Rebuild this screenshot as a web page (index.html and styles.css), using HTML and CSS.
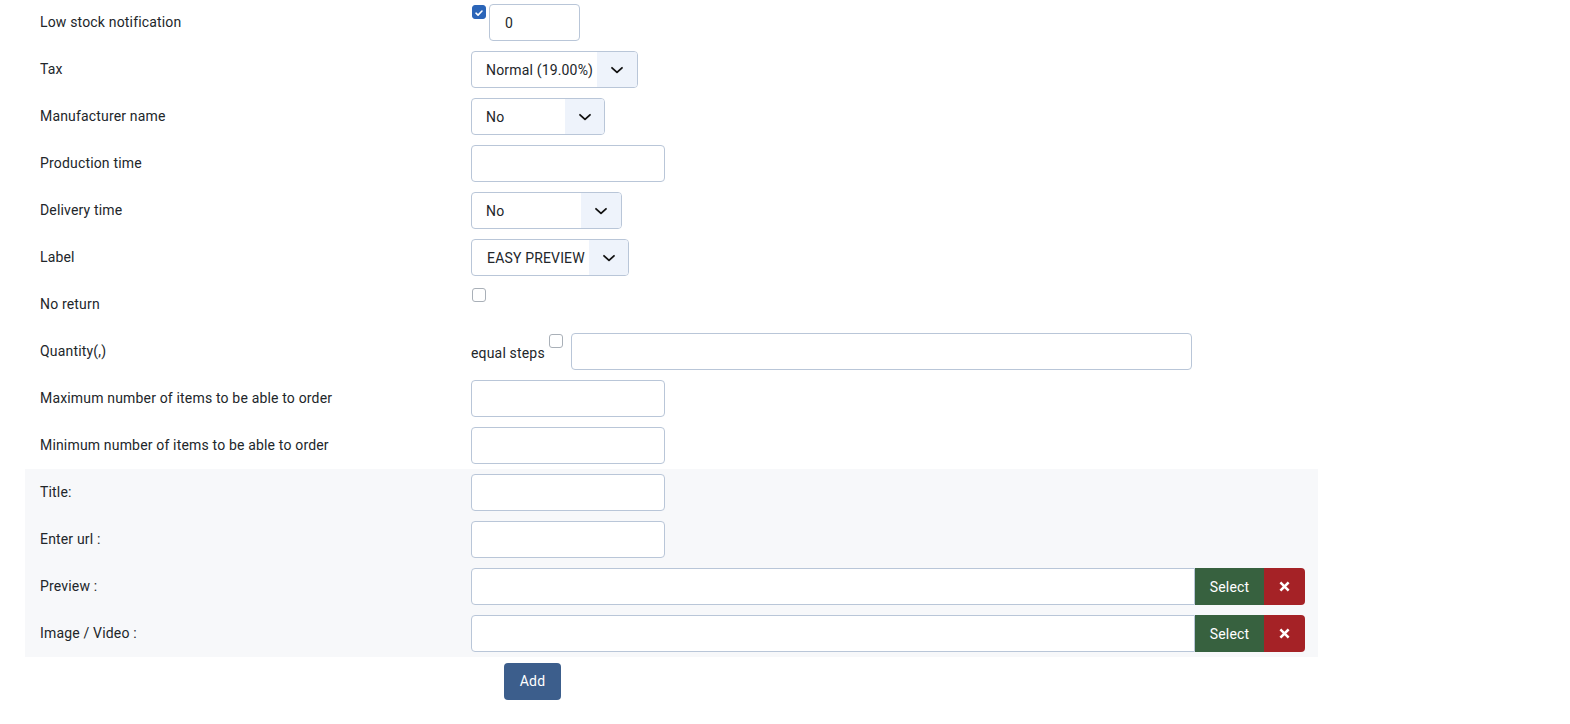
FILE: index.html
```html
<!DOCTYPE html>
<html>
<head>
<meta charset="utf-8">
<link rel="stylesheet" href="styles.css">
</head>
<body>
<div class="form">
  <div class="row">
    <div class="label">Low stock notification</div>
    <div class="ctrl ctrl-top">
      <span class="cb checked"><svg viewBox="0 0 14 14" width="14" height="14"><path d="M3.5 7.2l2.4 2.3 4.6-4.8" fill="none" stroke="#fff" stroke-width="1.8" stroke-linecap="round" stroke-linejoin="round"/></svg></span>
      <div class="input small">0</div>
    </div>
  </div>
  <div class="row">
    <div class="label">Tax</div>
    <div class="ctrl"><div class="select w166"><span class="val">Normal (19.00%)</span><span class="arrow"><svg viewBox="0 0 14 14" width="14" height="14"><path d="M2 4.8l5 4.6 5-4.6" fill="none" stroke="#111" stroke-width="1.8" stroke-linecap="round" stroke-linejoin="round"/></svg></span></div></div>
  </div>
  <div class="row">
    <div class="label">Manufacturer name</div>
    <div class="ctrl"><div class="select w133"><span class="val">No</span><span class="arrow"><svg viewBox="0 0 14 14" width="14" height="14"><path d="M2 4.8l5 4.6 5-4.6" fill="none" stroke="#111" stroke-width="1.8" stroke-linecap="round" stroke-linejoin="round"/></svg></span></div></div>
  </div>
  <div class="row">
    <div class="label">Production time</div>
    <div class="ctrl"><div class="input w193"></div></div>
  </div>
  <div class="row">
    <div class="label">Delivery time</div>
    <div class="ctrl"><div class="select w150"><span class="val">No</span><span class="arrow"><svg viewBox="0 0 14 14" width="14" height="14"><path d="M2 4.8l5 4.6 5-4.6" fill="none" stroke="#111" stroke-width="1.8" stroke-linecap="round" stroke-linejoin="round"/></svg></span></div></div>
  </div>
  <div class="row">
    <div class="label">Label</div>
    <div class="ctrl"><div class="select w157"><span class="val">EASY PREVIEW</span><span class="arrow"><svg viewBox="0 0 14 14" width="14" height="14"><path d="M2 4.8l5 4.6 5-4.6" fill="none" stroke="#111" stroke-width="1.8" stroke-linecap="round" stroke-linejoin="round"/></svg></span></div></div>
  </div>
  <div class="row">
    <div class="label">No return</div>
    <div class="ctrl ctrl-top"><span class="cb cb-noreturn"></span></div>
  </div>
  <div class="row">
    <div class="label">Quantity(,)</div>
    <div class="ctrl ctrl-qty">
      <span class="eq">equal steps</span>
      <span class="cb cb-eq"></span>
      <div class="input w620"></div>
    </div>
  </div>
  <div class="row">
    <div class="label">Maximum number of items to be able to order</div>
    <div class="ctrl"><div class="input w193"></div></div>
  </div>
  <div class="row">
    <div class="label">Minimum number of items to be able to order</div>
    <div class="ctrl"><div class="input w193"></div></div>
  </div>
  <div class="row gray">
    <div class="label">Title:</div>
    <div class="ctrl"><div class="input w193"></div></div>
  </div>
  <div class="row gray">
    <div class="label">Enter url :</div>
    <div class="ctrl"><div class="input w193"></div></div>
  </div>
  <div class="row gray">
    <div class="label">Preview :</div>
    <div class="ctrl">
      <div class="group">
        <div class="input grow"></div>
        <span class="btn-select">Select</span>
        <span class="btn-x"><svg viewBox="0 0 12 12" width="11" height="11"><path d="M2.5 2.5l7 7M9.5 2.5l-7 7" stroke="#fff" stroke-width="2.8" stroke-linecap="square"/></svg></span>
      </div>
    </div>
  </div>
  <div class="row gray">
    <div class="label">Image / Video :</div>
    <div class="ctrl">
      <div class="group">
        <div class="input grow"></div>
        <span class="btn-select">Select</span>
        <span class="btn-x"><svg viewBox="0 0 12 12" width="11" height="11"><path d="M2.5 2.5l7 7M9.5 2.5l-7 7" stroke="#fff" stroke-width="2.8" stroke-linecap="square"/></svg></span>
      </div>
    </div>
  </div>
  <div class="footer">
    <span class="btn-add">Add</span>
  </div>
</div>
</body>
</html>
```

FILE: styles.css
```css
html, body {
  margin: 0;
  padding: 0;
  background: #fff;
}
body {
  font-family: Roboto, "Liberation Sans", Arial, sans-serif;
  font-size: 14px;
  letter-spacing: 0.17px;
  color: #22262a;
}
.form {
  width: 1293px;
  margin-left: 25px;
  margin-top: -1px;
}
.row {
  display: grid;
  grid-template-columns: 445px 1fr;
  height: 47px;
  align-items: center;
}
.row.gray {
  background: #f7f8fa;
}
.label {
  padding-left: 15px;
  line-height: 20px;
  margin-top: -1px;
}
.ctrl {
  display: flex;
  align-items: center;
  padding-right: 14px;
  padding-left: 1px;
}
.ctrl-top {
  align-items: flex-start;
  align-self: start;
  padding-top: 6px;
}
.input {
  box-sizing: border-box;
  height: 37px;
  border: 1px solid #b9c6d8;
  border-radius: 4px;
  background: #fff;
  display: flex;
  align-items: center;
  padding-left: 15px;
}
.input.small {
  width: 91px;
  margin-left: 3px;
  margin-top: -1px;
}
.w193 { width: 194px; }
.w620 { width: 621px; }
.select {
  box-sizing: border-box;
  height: 37px;
  border: 1px solid #b9c6d8;
  border-radius: 4px;
  display: flex;
  overflow: hidden;
  background: #fff;
}
.select .val {
  flex: 1;
  display: flex;
  align-items: center;
  padding-left: 14px;
  white-space: nowrap;
}
.select .arrow {
  width: 39px;
  background: #eef3fb;
  display: flex;
  align-items: center;
  justify-content: center;
}
.w166 { width: 167px; }
.w133 { width: 134px; }
.w150 { width: 151px; }
.w157 { width: 158px; }
.w166 .arrow { width: 40px; }
.w133 .arrow { width: 39px; }
.w150 .arrow { width: 40px; }
.w157 .arrow { width: 39px; }
.w157 .val { padding-left: 15px; }
.cb {
  box-sizing: border-box;
  width: 14px;
  height: 14px;
  border: 1px solid #a9b0b8;
  border-radius: 3px;
  background: #fff;
  display: inline-flex;
  flex: none;
  margin-left: 1px;
}
.cb.checked {
  background: #2b65b8;
  border-color: #2b65b8;
}
.cb-noreturn {
  margin-top: 1px;
}
.ctrl-qty {
  align-items: flex-start;
  padding-top: 0;
}
.eq {
  margin-top: 10px;
  line-height: 20px;
  margin-right: 4px;
}
.cb-eq {
  margin-top: 1px;
  margin-left: 0;
  margin-right: 8px;
}
.group {
  display: flex;
  width: 834px;
  height: 37px;
}
.input.grow {
  flex: 1;
  border-radius: 4px 0 0 4px;
}
.btn-select {
  width: 69px;
  background: #37613f;
  color: #fff;
  display: flex;
  align-items: center;
  justify-content: center;
  font-size: 14px;
}
.btn-x {
  width: 41px;
  background: #a52226;
  border-radius: 0 4px 4px 0;
  display: flex;
  align-items: center;
  justify-content: center;
}
.footer {
  height: 47px;
  display: flex;
  align-items: center;
  padding-left: 479px;
}
.btn-add {
  width: 57px;
  height: 37px;
  background: #3c5e8c;
  color: #fff;
  border-radius: 4px;
  display: flex;
  align-items: center;
  justify-content: center;
  margin-top: 1px;
}
```
